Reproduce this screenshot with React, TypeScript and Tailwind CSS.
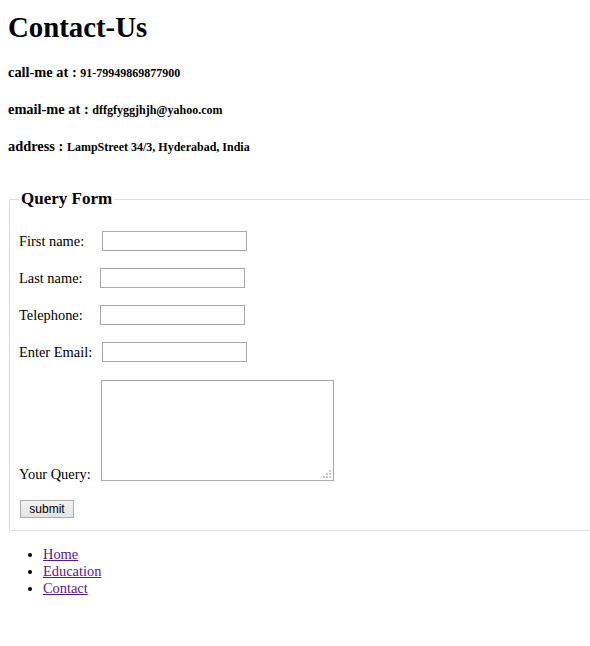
export default function App() {
  const rows = [
    { label: "First name:", offset: "w-[83px]" },
    { label: "Last name:", offset: "w-[81px]" },
    { label: "Telephone:", offset: "w-[81px]" },
    { label: "Enter Email:", offset: "w-[83px]" },
  ];

  return (
    <div className="min-h-[646px] overflow-hidden bg-white p-2 text-black [font-family:'Liberation_Serif',serif]">
      <h1 className="mt-[3px] mb-0 text-[28.8px] font-bold leading-[33px]">Contact-Us</h1>

      <h4 className="mt-[20px] text-[14.4px] font-bold leading-[17px]">
        call-me at : <span className="text-[12px]">91-79949869877900</span>
      </h4>
      <h4 className="mt-[19px] text-[14.4px] font-bold leading-[17px]">
        email-me at : <span className="text-[12px]">dffgfyggjhjh@yahoo.com</span>
      </h4>
      <h4 className="mt-[19px] text-[14.4px] font-bold leading-[17px]">
        address : <span className="text-[12px]">LampStreet 34/3, Hyderabad, India</span>
      </h4>

      <fieldset className="mx-[1px] mt-[33px] w-[640px] border border-[#dedede] px-[9px] pb-[12px] pt-0">
        <legend className="px-[2px] text-[17px] font-bold leading-[20px]">Query Form</legend>

        <div className="flex flex-col text-[14.4px] leading-[17px]">
          {rows.map((r, i) => (
            <div key={r.label} className={`flex items-center ${i === 0 ? "mt-[22px]" : "mt-[17px]"}`}>
              <span className={r.offset}>{r.label}</span>
              <input
                type="text"
                className="h-[20px] w-[145px] border border-[#a9a9a9] bg-white px-1 text-[13px] outline-none"
              />
            </div>
          ))}

          <div className="mt-[18px] flex items-end">
            <span className="-mb-[2px] w-[82px]">Your Query:</span>
            <div className="relative">
              <textarea className="block h-[101px] w-[233px] resize-none border border-[#a9a9a9] bg-white outline-none" />
              <svg className="absolute bottom-[3px] right-[3px]" width="8" height="8" viewBox="0 0 8 8">
                <rect x="6" y="0" width="2" height="2" fill="#c8c8c8" />
                <rect x="3" y="3" width="2" height="2" fill="#c8c8c8" />
                <rect x="6" y="3" width="2" height="2" fill="#c8c8c8" />
                <rect x="0" y="6" width="2" height="2" fill="#c8c8c8" />
                <rect x="3" y="6" width="2" height="2" fill="#c8c8c8" />
                <rect x="6" y="6" width="2" height="2" fill="#c8c8c8" />
              </svg>
            </div>
          </div>

          <div className="mt-[19px]">
            <button
              type="submit"
              className="ml-[1px] h-[18px] w-[54px] border border-[#acacac] bg-gradient-to-b from-[#f2f2f2] to-[#e3e3e3] text-[12px] leading-[14px] [font-family:'Liberation_Sans',sans-serif]"
            >
              submit
            </button>
          </div>
        </div>
      </fieldset>

      <ul className="mt-[15px] list-disc pl-[35px] text-[14.4px] leading-[17px]">
        <li>
          <a href="#home" className="text-[#551a8b] underline">Home</a>
        </li>
        <li>
          <a href="#education" className="text-[#551a8b] underline">Education</a>
        </li>
        <li>
          <a href="#contact" className="text-[#551a8b] underline">Contact</a>
        </li>
      </ul>
    </div>
  );
}
